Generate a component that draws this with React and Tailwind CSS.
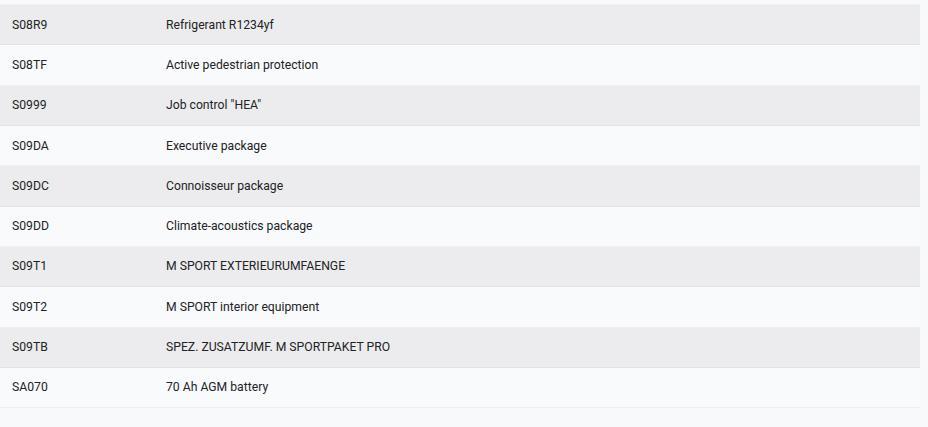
import React from 'react';

const rows = [
    { code: 'S08R9', label: 'Refrigerant R1234yf' },
    { code: 'S08TF', label: 'Active pedestrian protection' },
    { code: 'S0999', label: 'Job control "HEA"' },
    { code: 'S09DA', label: 'Executive package' },
    { code: 'S09DC', label: 'Connoisseur package' },
    { code: 'S09DD', label: 'Climate-acoustics package' },
    { code: 'S09T1', label: 'M SPORT EXTERIEURUMFAENGE' },
    { code: 'S09T2', label: 'M SPORT interior equipment' },
    { code: 'S09TB', label: 'SPEZ. ZUSATZUMF. M SPORTPAKET PRO' },
    { code: 'SA070', label: '70 Ah AGM battery' },
];

const App = () => {
    return (
        <div className="min-h-[427px] bg-[#f8f9fb] pt-[4px] font-['Roboto',sans-serif] text-[12.2px] text-[#222325]">
            <div className="w-[920px] border-t border-[#f1f2f4]">
                {rows.map((row, i) => (
                    <div
                        key={row.code}
                        className={
                            i % 2 === 0
                                ? 'flex h-[40.33px] items-center border-b border-[#e2e3e6] bg-[#ececee]'
                                : 'flex h-[40.33px] items-center border-b border-[#eeeff2] bg-[#f9fafc]'
                        }
                    >
                        <div className="w-[166px] pl-[12px]">{row.code}</div>
                        <div className="flex-1">{row.label}</div>
                    </div>
                ))}
            </div>
        </div>
    );
};

export default App;
